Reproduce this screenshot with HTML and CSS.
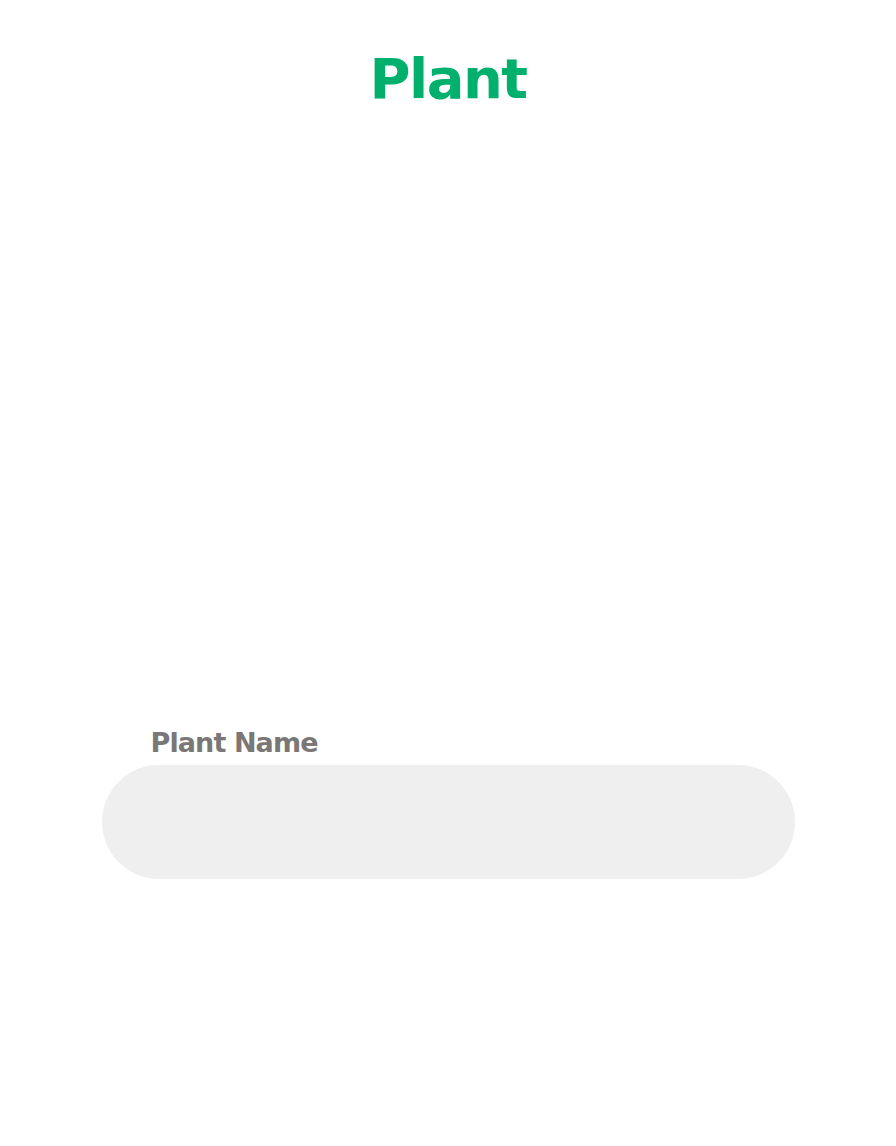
FILE: index.html
```html
<!DOCTYPE html>
<html>
<head>
<meta charset="utf-8">
<link rel="stylesheet" href="styles.css">
</head>
<body>
<div class="page">
  <h1 class="title">Plant</h1>
  <form class="form">
    <label class="label" for="name">Plant Name</label>
    <input class="field" id="name" type="text">
  </form>
</div>
</body>
</html>
```
FILE: styles.css
```css
html, body {
  margin: 0;
  padding: 0;
  background: #ffffff;
}
.page {
  width: 896px;
  height: 1146px;
  display: flex;
  flex-direction: column;
  align-items: center;
}
.title {
  margin: 46px 0 0 0;
  font-family: "DejaVu Sans", sans-serif;
  font-weight: 700;
  font-size: 56px;
  line-height: 66px;
  letter-spacing: -1.5px;
  color: #00b06c;
}
.form {
  margin-top: 615px;
  width: 693px;
  display: flex;
  flex-direction: column;
}
.label {
  margin-left: 49px;
  font-family: "DejaVu Sans", sans-serif;
  font-weight: 700;
  font-size: 27px;
  line-height: 32px;
  letter-spacing: -0.9px;
  color: #7a7777;
  margin-bottom: 6px;
}
.field {
  box-sizing: border-box;
  width: 693px;
  height: 114px;
  border: none;
  border-radius: 57px;
  background: #efefef;
  outline: none;
  padding: 0 40px;
  font-size: 24px;
}
```
